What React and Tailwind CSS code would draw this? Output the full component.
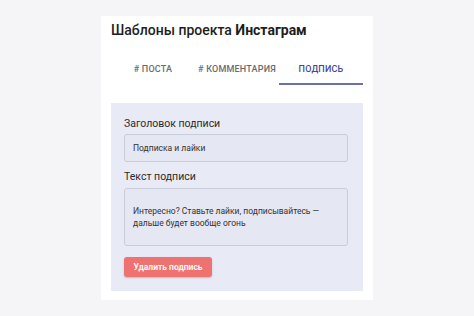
export default function App() {
  const tabs = [
    { label: "# ПОСТА", active: false },
    { label: "# КОММЕНТАРИЯ", active: false },
    { label: "ПОДПИСЬ", active: true },
  ]

  return (
    <div className="w-[474px] h-[316px] bg-[#f5f5f7] flex justify-center pt-4 font-['Roboto','Liberation_Sans',sans-serif]">
      <div className="w-[272px] h-[284px] bg-white px-[10px] pt-1">
        <h1 className="text-[14px] leading-5 font-medium text-[#1e1e1e]">
          Шаблоны проекта <span className="font-bold">Инстаграм</span>
        </h1>

        <div className="grid grid-cols-3 mt-4">
          {tabs.map((tab) => (
            <div
              key={tab.label}
              className={`h-[29px] flex items-center justify-center whitespace-nowrap text-[9px] font-medium tracking-[0.2px] border-b-2 ${
                tab.active ? "text-[#3f4a98] border-[#6a72aa]" : "text-[#6b6b6b] border-transparent"
              }`}
            >
              {tab.label}
            </div>
          ))}
        </div>

        <div className="mt-[18px] h-[188px] bg-[#e8eaf5] pl-[13px] pr-[15px] pt-[14px]">
          <div className="text-[10.5px] leading-[14px] text-[#2a2a2a]">Заголовок подписи</div>
          <div className="mt-[3px] h-[28px] rounded-[3px] border border-[#c9ccdb] bg-[#e5e7f2] px-2 flex items-center text-[8.5px] text-[#333]">
            Подписка и лайки
          </div>

          <div className="mt-2 text-[10.5px] leading-[14px] text-[#2a2a2a]">Текст подписи</div>
          <div className="mt-[4px] h-[58px] rounded-[3px] border border-[#c9ccdb] bg-[#e5e7f2] px-2 pt-[16px] text-[8.5px] leading-[12px] text-[#333]">
            Интересно? Ставьте лайки, подписывайтесь —
            <br />
            дальше будет вообще огонь
          </div>

          <button className="mt-[11px] w-[88px] h-[20px] rounded-[3px] bg-[#ee7270] text-white text-[8.5px] font-semibold shadow-[0_1px_2px_rgba(0,0,0,0.2)]">
            Удалить подпись
          </button>
        </div>
      </div>
    </div>
  )
}
